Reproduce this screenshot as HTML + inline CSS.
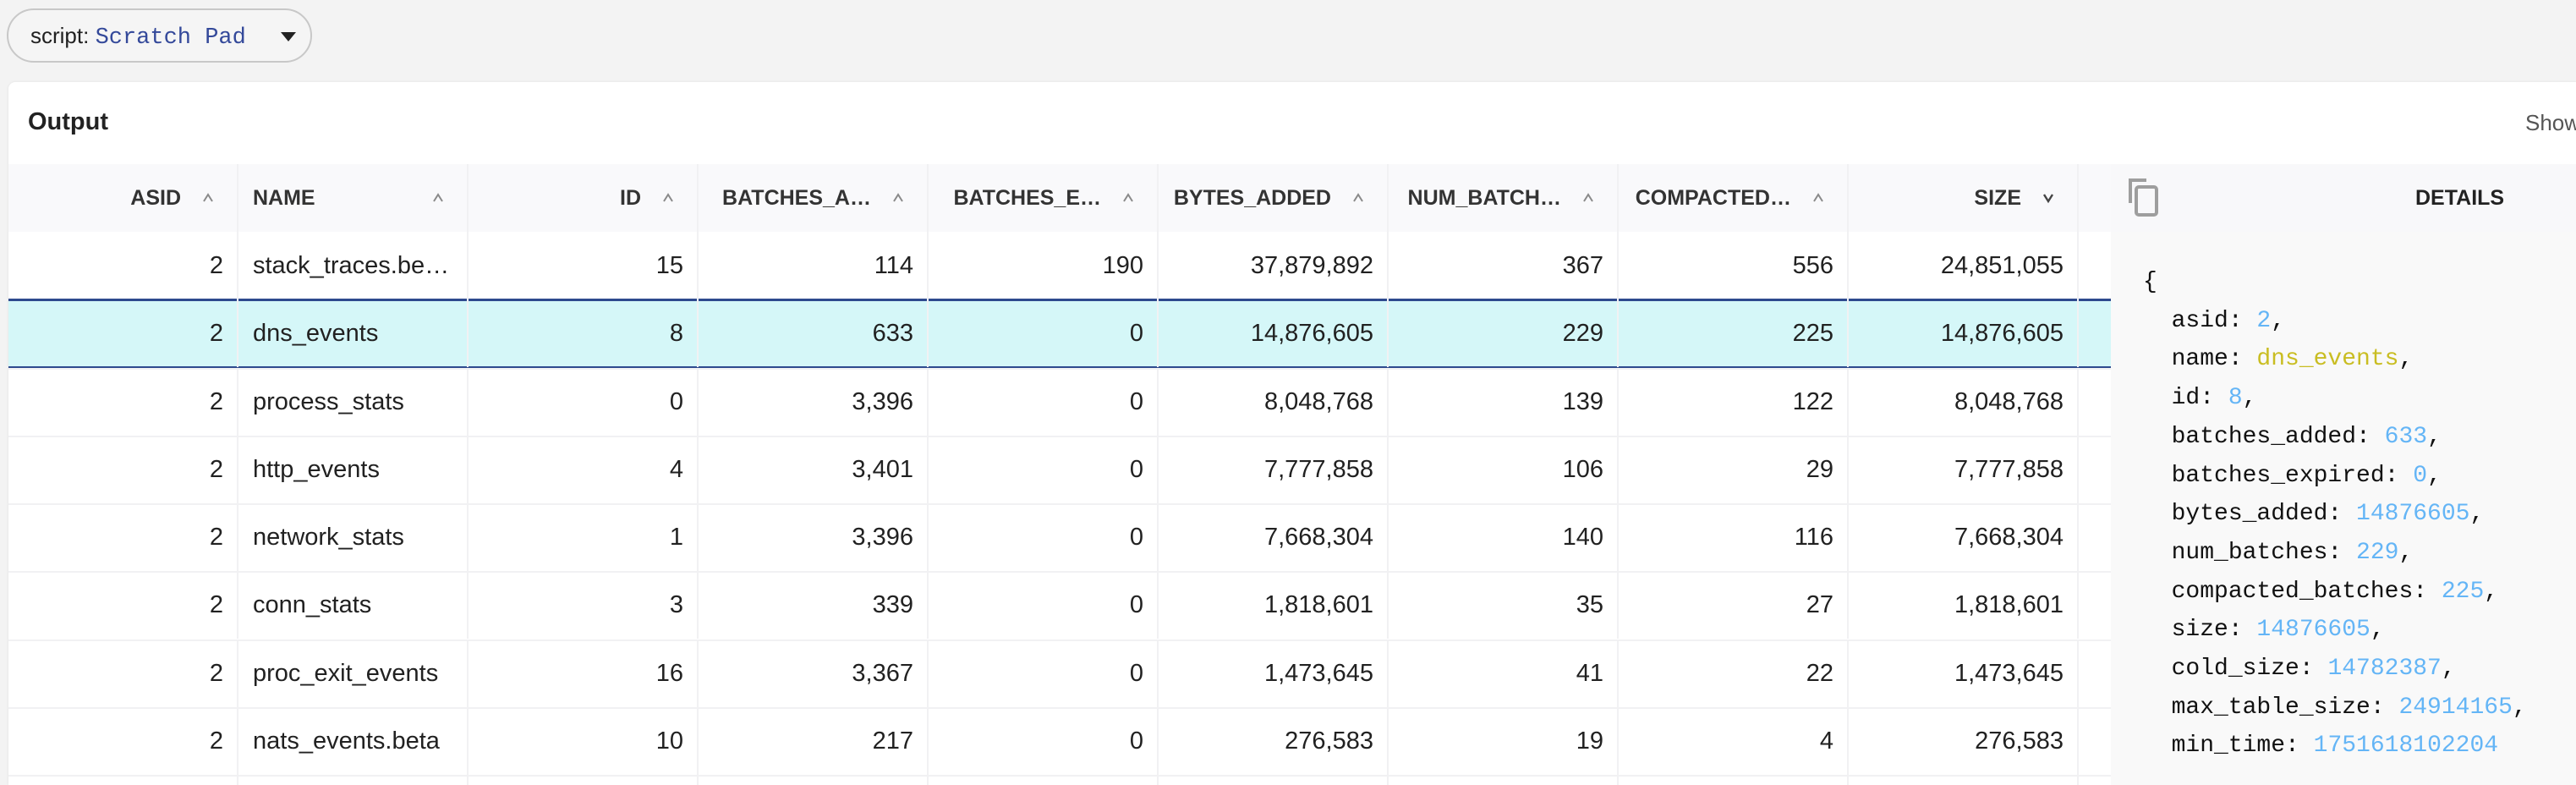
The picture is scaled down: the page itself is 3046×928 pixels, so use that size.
<!DOCTYPE html>
<html style="overflow:hidden;width:3046px;height:928px"><head><meta charset="utf-8"><style>
*{margin:0;padding:0;box-sizing:border-box}
body{width:3046px;height:928px;overflow:hidden;background:#f3f3f3;font-family:"Liberation Sans",Arial,sans-serif;position:relative;color:#212121}
#w{position:absolute;left:0;top:0;width:3046px;height:928px;overflow:hidden}
.pill{position:absolute;left:8px;top:10px;width:361px;height:64px;border:2px solid #c8c8c8;border-radius:32px;background:#f5f5f5;font-size:26px;line-height:60px;padding-left:26px;white-space:nowrap}
.pill .m{font-family:"Liberation Mono",monospace;color:#34499a;font-size:27px}
.pill .tri{position:absolute;left:322px;top:26px;width:0;height:0;border-left:9px solid transparent;border-right:9px solid transparent;border-top:11px solid #222}
.card{position:absolute;left:10px;top:97px;right:0;bottom:0;background:#fff;border-top-left-radius:8px;box-shadow:0 0 3px rgba(0,0,0,.08)}
.title{position:absolute;left:33px;top:128px;font-size:29px;font-weight:bold;color:#222}
.show{position:absolute;left:2986px;top:130px;font-size:26px;color:#555}
.hdr{position:absolute;left:10px;top:194px;width:2486px;height:80px;background:#f9f9fb}
.cell{position:absolute;height:80px;border-right:2px solid #f1f1f3;font-size:29px;line-height:80px;white-space:nowrap}
.h{font-size:25px;font-weight:bold;color:#333}
.h svg{position:absolute;right:26px;top:33px}
.sel{position:absolute;left:10px;top:353px;width:2486px;height:83px;background:#d5f7f8;border-top:3px solid #2e4a8e;border-bottom:3px solid #2e4a8e}
.det{position:absolute;left:2496px;top:194px;right:0;bottom:0;background:#f9f9f9}
.dh{position:absolute;left:2496px;top:194px;right:0;height:80px;background:#f8f8fa}
.json{position:absolute;left:2534px;top:311px;font-family:"Liberation Mono",monospace;font-size:28px;line-height:45.7px;color:#111;white-space:pre}
.n{color:#64b5f6}.s{color:#c9bd22}
</style></head><body><div id="w">
<div class="pill">script: <span class="m">Scratch Pad</span><span class="tri"></span></div>
<div class="card"></div>
<div class="title">Output</div>
<div class="show">Show</div>
<div class="hdr"></div>
<div class="det"></div>
<div class="dh"></div>
<div class="sel"></div>
<svg style="position:absolute;left:2516px;top:210px" width="44" height="48" viewBox="0 0 44 48"><path d="M3 30 V3 H22" fill="none" stroke="#9e9e9e" stroke-width="4"/><rect x="10" y="11" width="24" height="33" rx="3" fill="none" stroke="#9e9e9e" stroke-width="4"/></svg>
<div style="position:absolute;left:2856px;top:194px;line-height:80px;font-size:25px;font-weight:bold;color:#222">DETAILS</div>
<div id="t"></div>
<div class="json">{
  asid: <span class="n">2</span>,
  name: <span class="s">dns_events</span>,
  id: <span class="n">8</span>,
  batches_added: <span class="n">633</span>,
  batches_expired: <span class="n">0</span>,
  bytes_added: <span class="n">14876605</span>,
  num_batches: <span class="n">229</span>,
  compacted_batches: <span class="n">225</span>,
  size: <span class="n">14876605</span>,
  cold_size: <span class="n">14782387</span>,
  max_table_size: <span class="n">24914165</span>,
  min_time: <span class="n">1751618102204</span></div>
</div>
<script>
var H=[["ASID",1],["NAME",0],["ID",1],["BATCHES_A…",1],["BATCHES_E…",1],["BYTES_ADDED",1],["NUM_BATCH…",1],["COMPACTED…",1],["SIZE",1]];
var R=[["2","stack_traces.be…","15","114","190","37,879,892","367","556","24,851,055"],
["2","dns_events","8","633","0","14,876,605","229","225","14,876,605"],
["2","process_stats","0","3,396","0","8,048,768","139","122","8,048,768"],
["2","http_events","4","3,401","0","7,777,858","106","29","7,777,858"],
["2","network_stats","1","3,396","0","7,668,304","140","116","7,668,304"],
["2","conn_stats","3","339","0","1,818,601","35","27","1,818,601"],
["2","proc_exit_events","16","3,367","0","1,473,645","41","22","1,473,645"],
["2","nats_events.beta","10","217","0","276,583","19","4","276,583"],
["","","","","","","","",""]];
var up='<svg width="16" height="14" viewBox="0 0 16 14"><path d="M3 11 L8 3 L13 11" fill="none" stroke="#8a8a8a" stroke-width="2"/></svg>';
var dn='<svg width="16" height="14" viewBox="0 0 16 14"><path d="M3 3 L8 11 L13 3" fill="none" stroke="#444" stroke-width="2.4"/></svg>';
var o="";
for(var c=0;c<9;c++){var x=10+c*272;
o+='<div class="cell h" style="left:'+x+'px;top:194px;width:272px;'+(H[c][1]?'text-align:right;padding-right:66px':'padding-left:17px')+'">'+H[c][0]+(c==8?dn:up)+'</div>';}
o+='<div class="cell" style="left:2458px;top:194px;width:38px;border-right:0"></div>';
var ys=[274,354,435,515,595,675,756,836,916];
for(var r=0;r<9;r++){var hh=r==8?12:80;for(var c=0;c<9;c++){var x=10+c*272;
o+='<div class="cell" style="height:'+hh+'px;overflow:hidden;left:'+x+'px;top:'+ys[r]+'px;width:272px;'+(c==1?'padding-left:17px':'text-align:right;padding-right:16px')+'">'+R[r][c]+'</div>';}
if(r!=0&&r!=1)o+='<div style="position:absolute;left:10px;width:2486px;top:'+ys[r]+'px;height:2px;background:#f1f1f3"></div>';}
document.getElementById("t").innerHTML=o;
</script>
</body></html>
